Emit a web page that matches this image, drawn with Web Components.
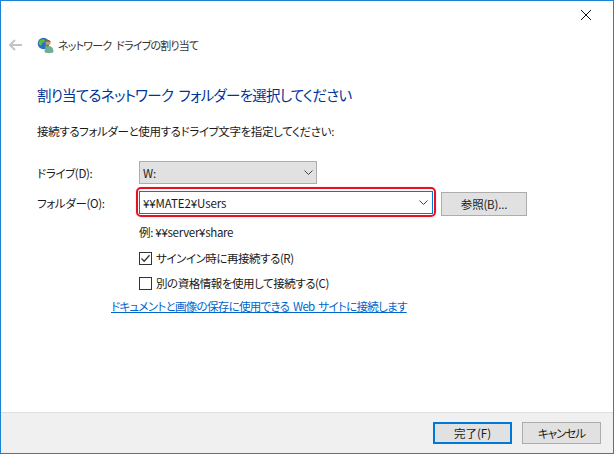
<!DOCTYPE html>
<html lang="ja">
<head>
<meta charset="utf-8">
<style>
  html, body { margin: 0; height: 100%; background: #fff; }
  body { font: 11.5px "Noto Sans CJK JP", "Noto Sans", sans-serif; font-feature-settings: "palt"; color: #1a1a1a; overflow: hidden; }
</style>
</head>
<body>
<wizard-window>
  <wizard-nav slot="nav">ネットワーク ドライブの割り当て</wizard-nav>
  <h-title slot="title">割り当てるネットワーク フォルダーを選択してください</h-title>
  <plain-line slot="intro" style="letter-spacing:-.37px">接続するフォルダーと使用するドライブ文字を指定してください:</plain-line>
  <drive-form slot="form"></drive-form>
  <push-button slot="footer" primary>完了(F)</push-button>
  <push-button slot="footer" style="letter-spacing:-1px">キャンセル</push-button>
</wizard-window>

<script>
class WizardWindow extends HTMLElement {
  constructor() {
    super();
    this.attachShadow({ mode: 'open' }).innerHTML = `
      <style>
        :host { display: flex; flex-direction: column; box-sizing: border-box; width: 614px; height: 454px; border: 1px solid #1883d7; background: #fff; }
        .close { display: flex; justify-content: flex-end; height: 29px; }
        .close svg { margin: 8px 21px 0 0; }
        main { flex: 1; display: flex; flex-direction: column; }
        .title { padding: 24px 0 0 36px; }
        .intro { padding: 16px 0 0 36px; }
        .form { padding: 21px 0 0 0; }
        footer { display: flex; justify-content: flex-end; gap: 10px; box-sizing: border-box; height: 41px; padding: 9px 12px 0 0; background: #f0f0f0; border-top: 1px solid #dfdfdf; }
      </style>
      <div class="close"><svg width="12" height="12" viewBox="0 0 12 12"><path d="M1 1L11 11M11 1L1 11" stroke="#111" stroke-width="1" fill="none"/></svg></div>
      <slot name="nav"></slot>
      <main>
        <div class="title"><slot name="title"></slot></div>
        <div class="intro"><slot name="intro"></slot></div>
        <div class="form"><slot name="form"></slot></div>
      </main>
      <footer><slot name="footer"></slot></footer>`;
  }
}

class WizardNav extends HTMLElement {
  constructor() {
    super();
    this.attachShadow({ mode: 'open' }).innerHTML = `
      <style>
        :host { display: flex; align-items: center; height: 30px; padding-left: 8px; font-size: 11px; letter-spacing: -.8px; word-spacing: 3px; color: #333; }
        svg.back { margin-right: 15px; }
        svg.icon { margin-right: 4px; }
      </style>
      <svg class="back" width="13" height="12" viewBox="0 0 13 12"><path d="M6 1L1 6L6 11M1 6H13" stroke="#c4c4c4" stroke-width="2" fill="none"/></svg>
      <svg class="icon" width="17" height="17" viewBox="0 0 17 17">
        <circle cx="6.5" cy="6.5" r="5.8" fill="#2a6fc4"/>
        <path d="M3 3.2C5 1.6 7 2 8 3.5C8 5.5 6 5 5 6.5C5.5 8.5 4 9 2.5 8C1.2 6 1.6 4.5 3 3.2Z" fill="#5dbb3f"/>
        <path d="M8.5 8.5C10 8 11 9 10 10.5C9 11.6 7.5 11 8.5 8.5Z" fill="#5dbb3f"/>
        <circle cx="11" cy="5.5" r="2.6" fill="#c39a6b"/>
        <path d="M8.4 5.2C8.6 2.6 13.4 2.4 13.6 5.2C12 4 10 4 8.4 5.2Z" fill="#5d4030"/>
        <path d="M7.5 15C7.5 11 9 9 11.5 9C14.5 9 16.5 11 16.5 15C16.5 16.5 7.5 16.5 7.5 15Z" fill="#6fae95"/>
      </svg>
      <span><slot></slot></span>`;
  }
}

class HTitle extends HTMLElement {
  constructor() {
    super();
    this.attachShadow({ mode: 'open' }).innerHTML = `
      <style>:host { display: block; font-size: 14.5px; letter-spacing: -.72px; word-spacing: 3px; line-height: 22px; color: #003399; }</style><slot></slot>`;
  }
}

class PlainLine extends HTMLElement {
  constructor() {
    super();
    this.attachShadow({ mode: 'open' }).innerHTML = `
      <style>:host { display: block; line-height: 18px; color: #1a1a1a; }</style><slot></slot>`;
  }
}

class ComboBox extends HTMLElement {
  constructor() {
    super();
    this.attachShadow({ mode: 'open' }).innerHTML = `
      <style>
        :host { display: flex; align-items: center; justify-content: space-between; box-sizing: border-box; height: 23px; padding: 0 3px 0 3px; border: 1px solid #adadad; background: #e1e1e1; color: #1a1a1a; letter-spacing: -.1px; }
        :host([editable]) { padding-right: 4px; border-color: #0078d7; background: #fff; }
        svg { flex: none; }
      </style>
      <span><slot></slot></span>
      <svg width="9" height="5" viewBox="0 0 9 5"><path d="M0.5 0.5L4.5 4.5L8.5 0.5" stroke="#444" fill="none"/></svg>`;
  }
}

class PushButton extends HTMLElement {
  constructor() {
    super();
    this.attachShadow({ mode: 'open' }).innerHTML = `
      <style>
        :host { display: flex; align-items: center; justify-content: center; box-sizing: border-box; width: 79px; height: 22px; border: 1px solid #adadad; background: #e1e1e1; color: #1a1a1a; }
        :host([primary]) { border: 2px solid #0078d7; }
      </style><slot></slot>`;
  }
}

class CheckBox extends HTMLElement {
  constructor() {
    super();
    const on = this.hasAttribute('checked');
    this.attachShadow({ mode: 'open' }).innerHTML = `
      <style>
        :host { display: flex; align-items: center; gap: 4px; height: 18px; letter-spacing: -.45px; color: #1a1a1a; }
        .box { display: flex; box-sizing: border-box; width: 13px; height: 13px; border: 1px solid #333; background: #fff; }
      </style>
      <span class="box">${on ? '<svg width="11" height="11" viewBox="0 0 11 11"><path d="M1.5 5.5L4.2 8.2L9.5 2.2" stroke="#333" stroke-width="1.3" fill="none"/></svg>' : ''}</span>
      <span><slot></slot></span>`;
  }
}

class DriveForm extends HTMLElement {
  constructor() {
    super();
    this.attachShadow({ mode: 'open' }).innerHTML = `
      <style>
        :host { display: block; }
        .row { display: flex; align-items: flex-start; padding-left: 36px; }
        .row label { width: 102px; flex: none; line-height: 24px; letter-spacing: -.35px; }
        .row.drive combo-box { width: 178px; }
        .row.folder { margin-top: 6px; }
        .row.folder combo-box { width: 294px; }
        .row.folder push-button { margin: 1px 0 0 8px; width: 86px; height: 24px; letter-spacing: -.2px; }
        .marker { position: absolute; inset: -4px -3px -3px; border: 2px solid #e81123; border-radius: 5px; box-shadow: 0 0 1px rgba(232, 17, 35, .5); pointer-events: none; }
        .wrap { position: relative; }
        .hint { padding: 7px 0 0 138px; letter-spacing: -.3px; }
        .opts { display: flex; flex-direction: column; gap: 7px; padding: 8px 0 0 138px; }
        .link { padding: 6px 0 0 110px; color: #0066cc; text-decoration: underline; letter-spacing: -.7px; word-spacing: 2px; }
      </style>
      <div class="row drive">
        <label>ドライブ(D):</label>
        <combo-box>W:</combo-box>
      </div>
      <div class="row folder">
        <label>フォルダー(O):</label>
        <div class="wrap">
          <combo-box editable>¥¥MATE2¥Users</combo-box>
          <div class="marker"></div>
        </div>
        <push-button>参照(B)...</push-button>
      </div>
      <div class="hint"><plain-line>例: ¥¥server¥share</plain-line></div>
      <div class="opts">
        <check-box checked>サインイン時に再接続する(R)</check-box>
        <check-box>別の資格情報を使用して接続する(C)</check-box>
      </div>
      <div class="link">ドキュメントと画像の保存に使用できる Web サイトに接続します</div>`;
  }
}

customElements.define('wizard-window', WizardWindow);
customElements.define('wizard-nav', WizardNav);
customElements.define('h-title', HTitle);
customElements.define('plain-line', PlainLine);
customElements.define('combo-box', ComboBox);
customElements.define('push-button', PushButton);
customElements.define('check-box', CheckBox);
customElements.define('drive-form', DriveForm);
</script>
</body>
</html>
